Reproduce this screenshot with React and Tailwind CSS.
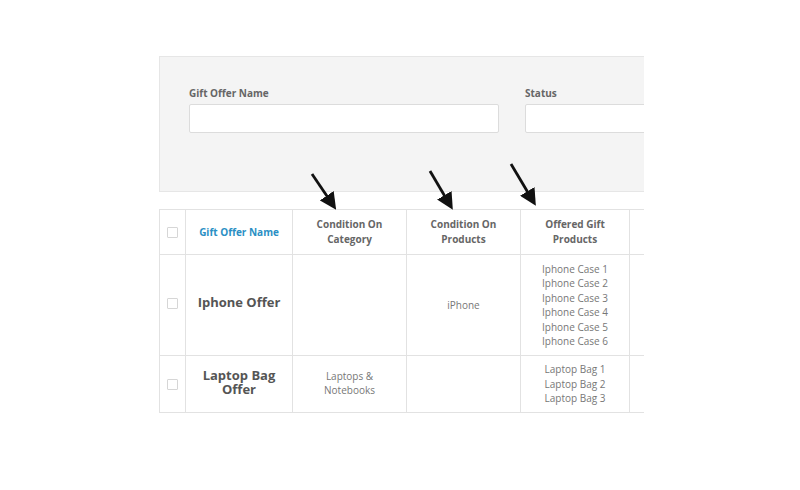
export default function App() {
  const gifts1 = ["Iphone Case 1", "Iphone Case 2", "Iphone Case 3", "Iphone Case 4", "Iphone Case 5", "Iphone Case 6"];
  const gifts2 = ["Laptop Bag 1", "Laptop Bag 2", "Laptop Bag 3"];

  const Check = () => (
    <div className="mx-auto w-[11px] h-[11px] border border-[#d6d6d6] bg-white rounded-[1px]" />
  );

  return (
    <div className="relative w-[800px] h-[490px] bg-white font-['Open_Sans',sans-serif] overflow-hidden">
      <div className="ml-[159px] pt-[56px] w-[485px] overflow-hidden">
        {/* filter panel */}
        <div className="h-[136px] w-[560px] bg-[#f4f4f4] border border-[#e6e6e6] flex gap-[26px] pl-[29px] pt-[29px]">
          <div className="flex flex-col w-[310px] shrink-0">
            <label className="text-[10px] font-bold text-[#666] leading-[14px] mb-[4px]">Gift Offer Name</label>
            <input className="h-[29px] bg-white border border-[#dcdcdc] rounded-[2px]" />
          </div>
          <div className="flex flex-col w-[200px] shrink-0">
            <label className="text-[10px] font-bold text-[#666] leading-[14px] mb-[4px]">Status</label>
            <input className="h-[29px] bg-white border border-[#dcdcdc] rounded-[2px]" />
          </div>
        </div>

        {/* table */}
        <table className="mt-[17px] table-fixed border-collapse w-[570px] text-center">
          <colgroup>
            <col className="w-[26px]" />
            <col className="w-[107px]" />
            <col className="w-[114px]" />
            <col className="w-[114px]" />
            <col className="w-[109px]" />
            <col className="w-[100px]" />
          </colgroup>
          <thead>
            <tr className="h-[45px] text-[10px] font-bold leading-[15px] text-[#666]">
              <th className="border border-[#e2e2e2]"><Check /></th>
              <th className="border border-[#e2e2e2] text-[#2a8fc4]">Gift Offer Name</th>
              <th className="border border-[#e2e2e2]">Condition On<br />Category</th>
              <th className="border border-[#e2e2e2]">Condition On<br />Products</th>
              <th className="border border-[#e2e2e2]">Offered Gift<br />Products</th>
              <th className="border border-[#e2e2e2]"></th>
            </tr>
          </thead>
          <tbody className="text-[10px] text-[#777] leading-[14.5px]">
            <tr className="h-[101px]">
              <td className="border border-[#e2e2e2] pb-[3px]"><Check /></td>
              <td className="border border-[#e2e2e2] text-[13px] font-bold text-[#555] pb-[6px]">Iphone Offer</td>
              <td className="border border-[#e2e2e2]"></td>
              <td className="border border-[#e2e2e2]">iPhone</td>
              <td className="border border-[#e2e2e2]">
                {gifts1.map((g) => (
                  <div key={g}>{g}</div>
                ))}
              </td>
              <td className="border border-[#e2e2e2]"></td>
            </tr>
            <tr className="h-[57px]">
              <td className="border border-[#e2e2e2]"><Check /></td>
              <td className="border border-[#e2e2e2] text-[13px] font-bold text-[#555] leading-[14px] pb-[5px]">Laptop Bag<br />Offer</td>
              <td className="border border-[#e2e2e2] pb-[2px]">Laptops &amp;<br />Notebooks</td>
              <td className="border border-[#e2e2e2]"></td>
              <td className="border border-[#e2e2e2]">
                {gifts2.map((g) => (
                  <div key={g}>{g}</div>
                ))}
              </td>
              <td className="border border-[#e2e2e2]"></td>
            </tr>
          </tbody>
        </table>
      </div>

      {/* annotation arrows */}
      <svg className="absolute left-0 top-0" width="800" height="490" viewBox="0 0 800 490">
        <defs>
          <marker id="ah" markerWidth="6" markerHeight="6" refX="4" refY="3" orient="auto" markerUnits="strokeWidth">
            <path d="M0,0 L6,3 L0,6 Z" fill="#111" />
          </marker>
        </defs>
        <line x1="312" y1="174" x2="333" y2="205" stroke="#111" strokeWidth="2.8" markerEnd="url(#ah)" />
        <line x1="430" y1="171" x2="450" y2="205" stroke="#111" strokeWidth="2.8" markerEnd="url(#ah)" />
        <line x1="511" y1="164" x2="533" y2="201" stroke="#111" strokeWidth="2.8" markerEnd="url(#ah)" />
      </svg>
    </div>
  );
}
